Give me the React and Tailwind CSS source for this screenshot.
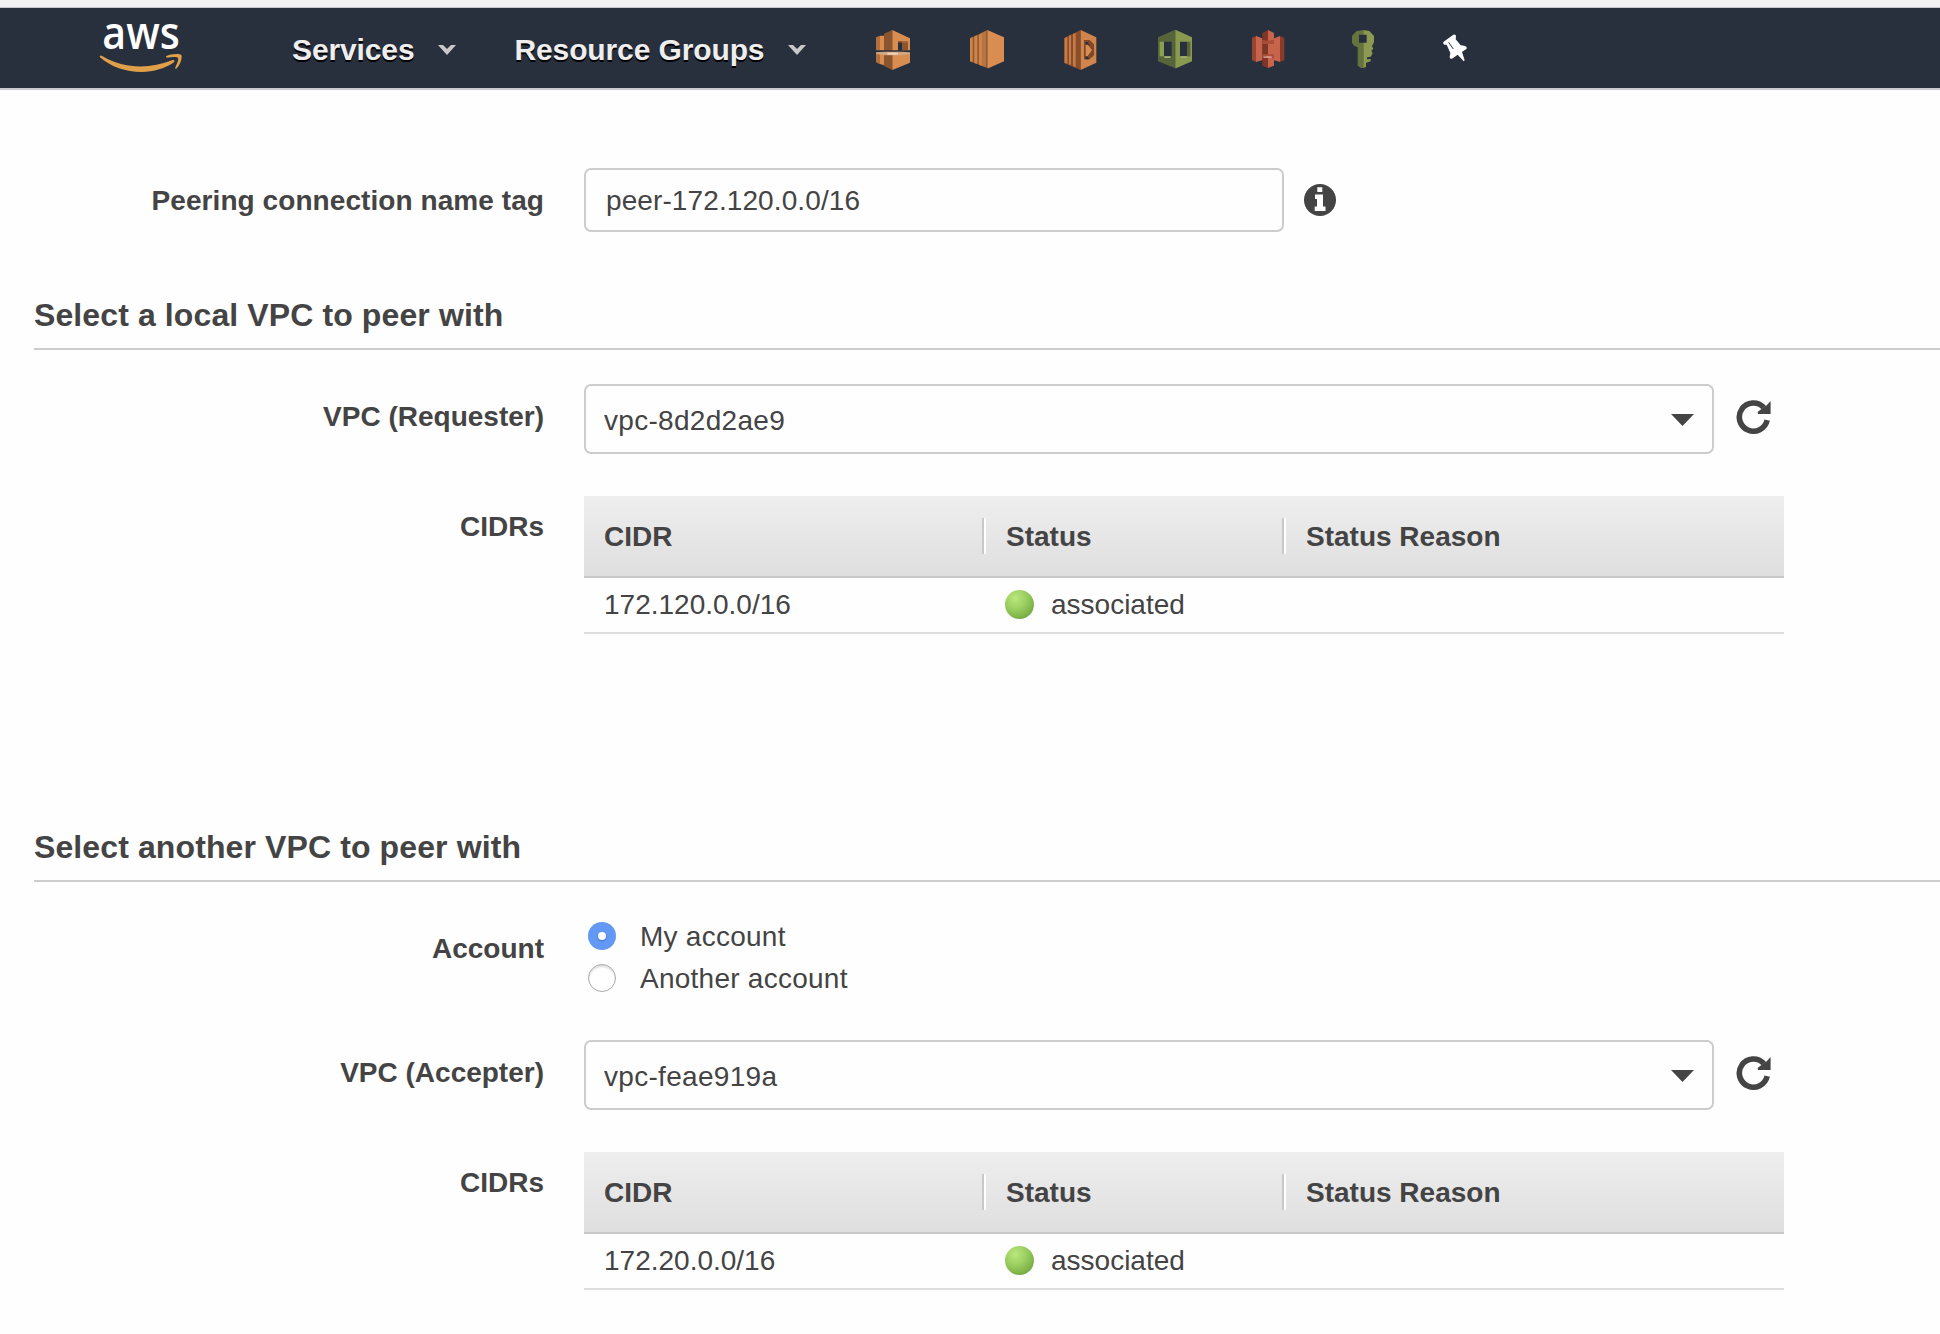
import React from "react";

const ICON = "block h-[40px] w-[34px] shrink-0";

function AwsLogo() {
  return (
    <svg className="block h-[76px] w-[88px]" viewBox="292 0 264 228">
      <text x="308" y="146" fontFamily="'Open Sans', sans-serif" fontSize="135" fontWeight="600" fill="#fff" textLength="232" lengthAdjust="spacingAndGlyphs">aws</text>
      <path d="M300 168 Q303 165 309 169 C372 206 448 209 519 180 Q527 179 523 187 C497 205 462 216 426 216 C378 216 334 201 301 172 Z" fill="#e0a04a" />
      <path d="M499 169 C512 161 539 160 545 165 C549 174 541 197 530 206 Q525 208 527 202 C532 191 538 177 535 173 C530 169 514 171 503 173 Q497 172 499 169 Z" fill="#e0a04a" />
    </svg>
  );
}

function Chevron() {
  return (
    <svg className="block h-[12px] w-[18px]" viewBox="0 0 18 12">
      <path d="M0 1 H5 L9 5 L13 1 H18 L9 11 Z" fill="#c9c9c9" />
    </svg>
  );
}

function ApiIcon() {
  return (
    <svg className={ICON} viewBox="0 0 102 120">
      <path d="M0 22 L12 17 V61 H0 Z M0 72 H12 V103 L0 97 Z" fill="#b06f3c" />
      <path d="M12 17 L24 17 V61 H12 Z M12 72 H24 V106 L12 102 Z" fill="#d98d50" />
      <path d="M24 11 L49 0 V61 H24 Z M24 72 H49 V120 L24 108 Z" fill="#8b552f" />
      <path d="M49 0 L102 25 V61 H49 Z M49 72 H102 V98 L49 120 Z" fill="#d98d50" />
      <path d="M66 33 H96 V60 H66 Z" fill="#8b552f" />
      <path d="M66 38 H78 V62 H66 Z" fill="#282f3d" />
      <path d="M78 33 H96 V38 H78 Z" fill="#a4683a" />
      <path d="M0 67 L28 65 H75 L102 67 V72 L75 76 H28 L0 72 Z" fill="#d3a67f" />
      <path d="M34 68 H66 V74 H34 Z" fill="#efd2bb" />
    </svg>
  );
}

function Ec2Icon() {
  return (
    <svg className={ICON} viewBox="0 0 102 120">
      <path d="M0 25 L52 0 V114 L0 94 Z" fill="#935b32" />
      <path d="M0 25 L8 21 V97 L0 94 Z M13 19 L22 16 V102 L13 99 Z M27 14 L36 9 V108 L27 104 Z" fill="#cc8449" />
      <path d="M36 9 L48 3 V112 L36 108 Z" fill="#b87440" />
      <path d="M52 0 L102 22 V94 L55 115 L52 114 Z" fill="#d98d50" />
    </svg>
  );
}

function LambdaIcon() {
  return (
    <svg className={ICON} viewBox="0 0 102 120">
      <path d="M0 24 L50 0 V120 L0 99 Z" fill="#8b4e2b" />
      <path d="M2 25 L10 20 V101 L2 98 Z M15 17 L21 14 V105 L15 103 Z M27 12 L35 8 V112 L27 108 Z" fill="#c57b45" />
      <path d="M50 0 L97 22 V98 L50 120 Z" fill="#cf854b" />
      <path d="M60 30 H77 L90 43 V76 L77 88 H60 Z" fill="#804826" />
      <path d="M64 36 L71 36 L76 46 L66 46 Z M64 80 L71 80 L76 88 L64 88 Z" fill="#282f3d" />
      <path d="M65 44 L71 44 L84 60 L71 78 L65 78 Z" fill="#d98d50" />
    </svg>
  );
}

function DeployIcon() {
  return (
    <svg className={ICON} viewBox="0 0 102 120">
      <path fillRule="evenodd" d="M0 22 L50 0 V114 L0 94 Z M18 35 H41 V79 H18 Z" fill="#58653a" />
      <path fillRule="evenodd" d="M54 0 L102 22 V94 L54 115 Z M66 35 H87 V79 H66 Z" fill="#89994e" />
      <path d="M50 0 H54 V115 H50 Z" fill="#718044" />
      <path d="M5 35 H18 V79 H5 Z" fill="#89a050" />
      <path d="M87 35 H97 V79 H87 Z" fill="#58653a" />
      <path d="M18 79 H39 L36 84 H20 Z M67 79 H87 L85 83 H69 Z" fill="#aab37b" />
    </svg>
  );
}

function S3Icon() {
  return (
    <svg className={ICON} viewBox="0 0 102 120">
      <path d="M0 23 L14 17 V96 L0 91 Z" fill="#9a452f" />
      <path d="M12 18 L31 25 V91 L12 96 Z M66 25 L84 18 V96 L66 91 Z" fill="#c6644c" />
      <path d="M84 18 L97 23 V91 L84 96 Z" fill="#873b29" />
      <path d="M31 28 L66 28 V91 H31 Z" fill="#aa4e38" />
      <path d="M31 42 H48 V73 H31 Z M31 9 L48 0 V33 L31 29 Z M31 86 L48 79 V114 L31 107 Z" fill="#803627" />
      <path d="M48 42 H66 V73 H48 Z M48 0 L66 9 V29 L48 33 Z M48 79 L66 86 V107 L48 114 Z" fill="#c6644c" />
      <path d="M33 80 L48 78 L62 80 L58 84 H37 Z" fill="#d3978a" />
    </svg>
  );
}

function KeyIcon() {
  return (
    <svg className={ICON} viewBox="0 0 102 120">
      <path fillRule="evenodd" d="M52 0 L32 3 L18 17 V39 L25 48 L35 52 V107 L45 114 H52 V38 H39 V14 H52 Z" fill="#65733e" />
      <path fillRule="evenodd" d="M52 0 L70 3 L84 18 V37 L78 48 L82 56 L76 62 L80 70 L74 80 L63 82 V88 L74 87 V94 L60 98 V111 L52 114 V38 H62 V14 H52 Z" fill="#8b9a50" />
    </svg>
  );
}

function PinIcon() {
  return (
    <svg className={ICON} viewBox="0 0 102 120">
      <path d="M10 36 L40 14 Q47 12 48 18 L47 28 L62 46 L73 47 Q82 50 80 56 L66 66 L74 91 L71 94 L53 74 L36 86 Q29 88 29 81 L31 69 L20 44 L13 44 Q8 41 10 36 Z" fill="#fff" />
      <path d="M26 37 L40 57" stroke="#282f3d" strokeWidth="3" />
    </svg>
  );
}

function NavLink({ children }) {
  return (
    <div className="flex items-center gap-[24px]">
      <span className="text-[30px] leading-[40px] font-bold tracking-[-0.12px] whitespace-nowrap text-[#eee] [text-shadow:0_2px_0_#000]">{children}</span>
      <Chevron />
    </div>
  );
}

function NavBar() {
  return (
    <header className="border-t-[7px] border-[#f1f1f1]">
      <div className="flex h-[83px] items-start border-t border-b-2 border-t-[#c8c8ce] border-b-[#cbcbcf] bg-[#282f3d]">
        <div className="ml-[97px] mt-[-8px]"><AwsLogo /></div>
        <nav className="ml-[107px] flex gap-[58px] pt-[22px]">
          <NavLink>Services</NavLink>
          <NavLink>Resource Groups</NavLink>
        </nav>
        <div className="ml-[70px] flex gap-[60px] pt-[22px]">
          <ApiIcon /><Ec2Icon /><LambdaIcon /><DeployIcon /><S3Icon /><KeyIcon /><PinIcon />
        </div>
      </div>
    </header>
  );
}

function InfoIcon() {
  return (
    <svg className="block size-[32px]" viewBox="0 0 32 32">
      <circle cx="16" cy="16" r="16" fill="#444" />
      <path d="M13.3 3.3 H18.3 V8 H13.3 Z M11 10.5 H19 V22.5 H21.5 V27 H10.7 V22.5 H13 V15 H11 Z" fill="#fff" />
    </svg>
  );
}

function RefreshIcon() {
  return (
    <svg className="block size-[36px]" viewBox="0 0 36 36">
      <path d="M27.6 8.3 A14.1 14.1 0 1 0 31.2 21.2" fill="none" stroke="#444" strokeWidth="5.6" />
      <path d="M34.6 2 V15 H21.8 V12.8 L25.5 10 L29 6.8 L30.5 6.5 Z" fill="#444" />
    </svg>
  );
}

function Row({ label, labelClass, children }) {
  return (
    <div className="flex items-start">
      <div className={"w-[544px] shrink-0 text-right font-bold " + labelClass}>{label}</div>
      <div className="ml-[40px] flex">{children}</div>
    </div>
  );
}

function VpcSelect({ value }) {
  return (
    <>
      <div className="flex h-[70px] w-[1130px] items-center justify-between rounded-[7px] border-2 border-[#ccc] pr-[18px] pl-[18px]">
        <span className="pt-[4px] tracking-[0.3px]">{value}</span>
        <svg className="mt-[1px] block h-[12px] w-[23px]" viewBox="0 0 23 12"><path d="M0 0 H23 L11.5 12 Z" fill="#444" /></svg>
      </div>
      <div className="ml-[22px] pt-[15px]"><RefreshIcon /></div>
    </>
  );
}

function HeadCell({ children, className }) {
  return <div className={"flex h-[36px] items-center pt-[2px] font-bold " + className}>{children}</div>;
}

function CidrTable({ cidr }) {
  return (
    <div className="w-[1200px]">
      <div className="flex h-[82px] items-start border-b-2 border-[#c9c9c9] bg-linear-to-b from-[#eee] to-[#dfdfdf] pt-[22px]">
        <HeadCell className="w-[402px] border-r-2 border-white pl-[20px] shadow-[inset_-2px_0_0_#c8c8c8]">CIDR</HeadCell>
        <HeadCell className="w-[300px] border-r-2 border-white pl-[20px] shadow-[inset_-2px_0_0_#c8c8c8]">Status</HeadCell>
        <HeadCell className="pl-[20px]">Status Reason</HeadCell>
      </div>
      <div className="flex h-[56px] items-center border-b-2 border-[#ddd]">
        <div className="w-[421px] pl-[20px]">{cidr}</div>
        <div className="flex items-center">
          <span className="mt-[-1px] mr-[17px] size-[29px] rounded-full bg-[radial-gradient(circle_at_36%_28%,#b9e77d_0%,#9bce60_40%,#7fb34a_70%,#55882e_100%)]" />
          <span>associated</span>
        </div>
      </div>
    </div>
  );
}

function SectionTitle({ children }) {
  return (
    <h2 className="ml-[34px] h-[53px] border-b-2 border-[#ccc] text-[32px] leading-[36px] font-bold tracking-[0.11px]">{children}</h2>
  );
}

function Radio({ checked, children }) {
  return (
    <div className="flex h-[42px] items-center gap-[24px]">
      {checked ? (
        <span className="flex size-[28px] items-center justify-center rounded-full bg-[#6399f5]">
          <span className="size-[8px] rounded-full bg-white shadow-[0_1px_2px_#3d6fc4]" />
        </span>
      ) : (
        <span className="size-[28px] rounded-full border border-[#aaa] bg-white shadow-[inset_0_2px_2px_#ddd]" />
      )}
      <span className="pt-[2px] tracking-[0.25px]">{children}</span>
    </div>
  );
}

export default function App() {
  return (
    <div className="h-[1334px] w-[1940px] overflow-hidden bg-[#fefefe] font-['Liberation_Sans',Arial,sans-serif] text-[28px] leading-[32px] text-[#444]">
      <NavBar />
      <main className="pt-[78px]">
        <Row label="Peering connection name tag" labelClass="pt-[17px] tracking-[0.07px]">
          <div className="flex h-[64px] w-[700px] items-center rounded-[7px] border-2 border-[#ccc] pt-[2px] pl-[20px] tracking-[0.1px]">peer-172.120.0.0/16</div>
          <div className="ml-[20px] pt-[16px]"><InfoIcon /></div>
        </Row>
        <div className="mt-[65px]"><SectionTitle>Select a local VPC to peer with</SectionTitle></div>
        <div className="mt-[34px]">
          <Row label="VPC (Requester)" labelClass="pt-[17px]"><VpcSelect value="vpc-8d2d2ae9" /></Row>
        </div>
        <div className="mt-[42px]">
          <Row label="CIDRs" labelClass="pt-[15px]"><CidrTable cidr="172.120.0.0/16" /></Row>
        </div>
        <div className="mt-[195px]"><SectionTitle>Select another VPC to peer with</SectionTitle></div>
        <div className="mt-[33px]">
          <Row label="Account" labelClass="pt-[18px]">
            <div className="ml-[4px]">
              <Radio checked>My account</Radio>
              <Radio>Another account</Radio>
            </div>
          </Row>
        </div>
        <div className="mt-[41px]">
          <Row label="VPC (Accepter)" labelClass="pt-[17px]"><VpcSelect value="vpc-feae919a" /></Row>
        </div>
        <div className="mt-[42px]">
          <Row label="CIDRs" labelClass="pt-[15px]"><CidrTable cidr="172.20.0.0/16" /></Row>
        </div>
      </main>
    </div>
  );
}
